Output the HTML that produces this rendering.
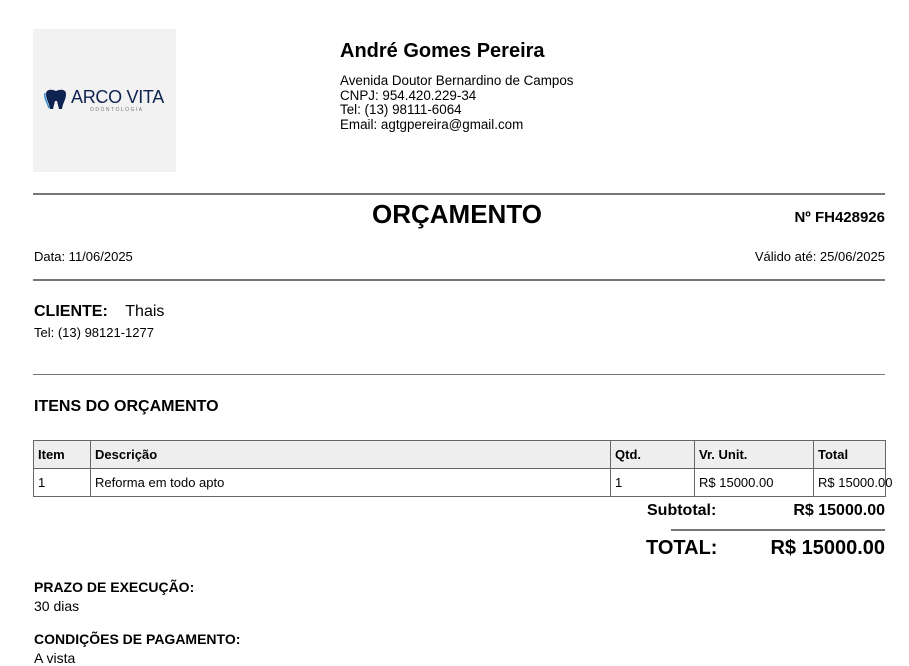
<!DOCTYPE html>
<html><head><meta charset="utf-8"><style>
*{margin:0;padding:0;box-sizing:border-box}
body{width:909px;height:656px;overflow:hidden;background:#fff;font-family:"Liberation Sans",sans-serif;color:#000;position:relative}
.a{position:absolute;white-space:nowrap}
.hr{position:absolute;left:33px;width:852px;background:#777}
table{position:absolute;left:33px;top:440px;border-collapse:collapse;font-size:13px;table-layout:fixed;width:852px}
td{border:1px solid #666;height:28px;padding:0 4px;vertical-align:middle;white-space:nowrap;overflow:visible}
tr.h td{background:#eee;font-weight:bold}
</style></head><body>
<div class="a" style="left:33px;top:29px;width:143px;height:143px;background:#f2f2f2"></div>
<svg class="a" style="left:44px;top:88px" width="24" height="24" viewBox="0 0 24 24"><path d="M2 6 C2 1 8 1 12 3 C16 1 22 1 22 6 C22 12 19 14 18 21 L15 21 L13 13 L11 13 L9 21 L6 21 C5 14 2 12 2 6Z" fill="#0f2350"/><path d="M1 5 C0 10 3 14 5 20" stroke="#3b8fd0" stroke-width="1.5" fill="none"/></svg>
<div class="a" style="left:71px;top:87px;font-size:18px;color:#0f2350;letter-spacing:-0.3px">ARCO VITA</div>
<div class="a" style="left:90px;top:107px;font-size:5px;color:#777;letter-spacing:1.5px">ODONTOLOGIA</div>
<div class="a" style="left:340px;top:40px;font-size:20px;font-weight:bold">André Gomes Pereira</div>
<div class="a" style="left:340px;top:74px;font-size:13.4px;line-height:14.5px">Avenida Doutor Bernardino de Campos<br>CNPJ: 954.420.229-34<br>Tel: (13) 98111-6064<br>Email: agtgpereira@gmail.com</div>
<div class="hr" style="top:193px;height:2px"></div>
<div class="a" style="left:372px;top:199px;font-size:26px;font-weight:bold">ORÇAMENTO</div>
<div class="a" style="right:24px;top:209px;font-size:15px;font-weight:bold">Nº FH428926</div>
<div class="a" style="left:34px;top:249px;font-size:13px">Data: 11/06/2025</div>
<div class="a" style="right:24px;top:249px;font-size:13px">Válido até: 25/06/2025</div>
<div class="hr" style="top:279px;height:2px"></div>
<div class="a" style="left:34px;top:303px;font-size:16px"><b>CLIENTE:</b>&nbsp;&nbsp;&nbsp; Thais</div>
<div class="a" style="left:34px;top:325px;font-size:13px">Tel: (13) 98121-1277</div>
<div class="hr" style="top:374px;height:1px"></div>
<div class="a" style="left:34px;top:398px;font-size:16px;font-weight:bold">ITENS DO ORÇAMENTO</div>
<table>
<colgroup><col style="width:57px"><col style="width:520px"><col style="width:84px"><col style="width:119px"><col style="width:72px"></colgroup>
<tr class="h"><td>Item</td><td>Descrição</td><td>Qtd.</td><td>Vr. Unit.</td><td>Total</td></tr>
<tr><td>1</td><td>Reforma em todo apto</td><td>1</td><td>R$ 15000.00</td><td>R$ 15000.00</td></tr>
</table>
<div class="a" style="left:647px;top:502px;font-size:16px;font-weight:bold">Subtotal:</div>
<div class="a" style="right:24px;top:502px;font-size:16px;font-weight:bold">R$ 15000.00</div>
<div class="a" style="left:671px;top:529px;width:214px;height:2px;background:#777"></div>
<div class="a" style="left:646px;top:537px;font-size:20px;font-weight:bold">TOTAL:</div>
<div class="a" style="right:24px;top:537px;font-size:20px;font-weight:bold">R$ 15000.00</div>
<div class="a" style="left:34px;top:579px;font-size:14px;font-weight:bold">PRAZO DE EXECUÇÃO:</div>
<div class="a" style="left:34px;top:598px;font-size:14px">30 dias</div>
<div class="a" style="left:34px;top:631px;font-size:14px;font-weight:bold">CONDIÇÕES DE PAGAMENTO:</div>
<div class="a" style="left:34px;top:650px;font-size:14px">A vista</div>
</body></html>
